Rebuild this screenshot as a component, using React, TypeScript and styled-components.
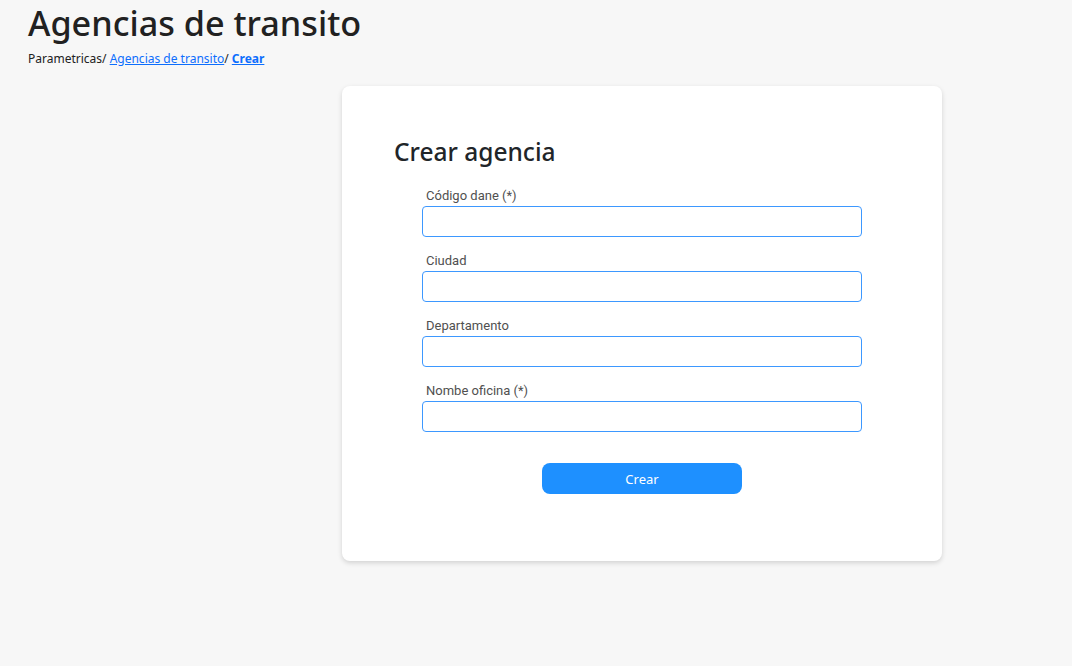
import styled, { createGlobalStyle } from "styled-components";

const Global = createGlobalStyle`
    body {
        margin: 0;
        background: #f7f7f7;
        font-family: "Noto Sans", "Open Sans", sans-serif;
        color: #212529;
    }
`

const Pagina = styled.div`
    min-height: 666px;
    padding: 0 28px;
`

const Titulo = styled.h1`
    margin: 0;
    padding-top: 1px;
    font-size: 34.2px;
    font-weight: 500;
    line-height: 44px;
    color: #212121;
`

const Migas = styled.div`
    font-size: 12px;
    line-height: 16px;
    margin-top: 6px;
    color: #212121;
`

const Miga = styled.a<{ $activa?: boolean }>`
    color: #0d6efd;
    text-decoration: underline;
    font-weight: ${p => (p.$activa ? 700 : 400)};
`

const Centro = styled.div`
    display: flex;
    justify-content: center;
    margin-top: 19px;
    padding-left: 212px;
`

const Tarjeta = styled.div`
    width: 600px;
    box-sizing: border-box;
    background: #fff;
    border-radius: 8px;
    box-shadow: 0 2px 5px rgba(0, 0, 0, 0.15);
    padding: 46px 52px 67px;
`

const TituloTarjeta = styled.h3`
    margin: 0 0 16px;
    font-size: 24.5px;
    font-weight: 500;
    line-height: 40px;
    color: #212529;
`

const Formulario = styled.form`
    width: 440px;
    margin: 0 auto;
    display: flex;
    flex-direction: column;
    gap: 16px;
`

const Campo = styled.div`
    display: flex;
    flex-direction: column;
    gap: 2px;
`

const Etiqueta = styled.label`
    font-family: Roboto, sans-serif;
    font-size: 13px;
    line-height: 16px;
    color: #505050;
    padding-left: 4px;
`

const Entrada = styled.input`
    box-sizing: border-box;
    height: 31px;
    width: 100%;
    border: 1px solid #3d98ff;
    border-radius: 4px;
    background: #fff;
    outline: none;
`

const Boton = styled.button`
    align-self: center;
    margin-top: 15px;
    width: 200px;
    height: 31px;
    border: none;
    border-radius: 8px;
    background: #1e90ff;
    color: #fff;
    font-family: "Noto Sans", sans-serif;
    font-size: 13px;
`

const campos = ["Código dane (*)", "Ciudad", "Departamento", "Nombe oficina (*)"]

export default function App() {
    return (
        <>
            <Global />
            <Pagina>
                <Titulo>Agencias de transito</Titulo>
                <Migas>
                    Parametricas/ <Miga>Agencias de transito</Miga>/ <Miga $activa>Crear</Miga>
                </Migas>
                <Centro>
                    <Tarjeta>
                        <TituloTarjeta>Crear agencia</TituloTarjeta>
                        <Formulario>
                            {campos.map(c => (
                                <Campo key={c}>
                                    <Etiqueta>{c}</Etiqueta>
                                    <Entrada />
                                </Campo>
                            ))}
                            <Boton type="button">Crear</Boton>
                        </Formulario>
                    </Tarjeta>
                </Centro>
            </Pagina>
        </>
    )
}
